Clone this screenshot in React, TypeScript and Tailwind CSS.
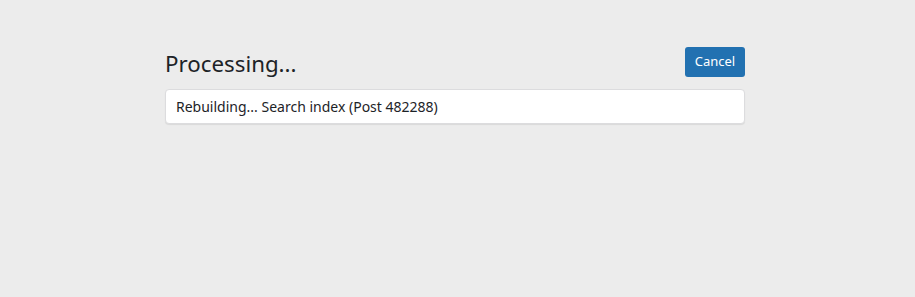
export default function App() {
  return (
    <div className="min-h-[297px] w-full bg-[#ececec] font-['Noto_Sans',sans-serif]">
      <div className="ml-[165px] w-[580px] pt-[47px]">
        {/* header row */}
        <div className="flex items-start justify-between">
          <h1 className="pt-[2px] text-[22.3px] leading-[30px] font-normal text-[#1d2327]">Processing...</h1>
          <button className="h-[30px] w-[60px] rounded-[3px] bg-[#2271b1] text-[13px] text-white">Cancel</button>
        </div>

        {/* status box */}
        <div className="mt-[10px] h-[35px] rounded-[4px] border border-[#dcdcde] bg-white px-[10px] shadow-[0_1px_1px_rgba(0,0,0,0.08)] flex items-center">
          <p className="text-[14px] text-[#1d2327]">Rebuilding... Search index (Post 482288)</p>
        </div>
      </div>
    </div>
  )
}
